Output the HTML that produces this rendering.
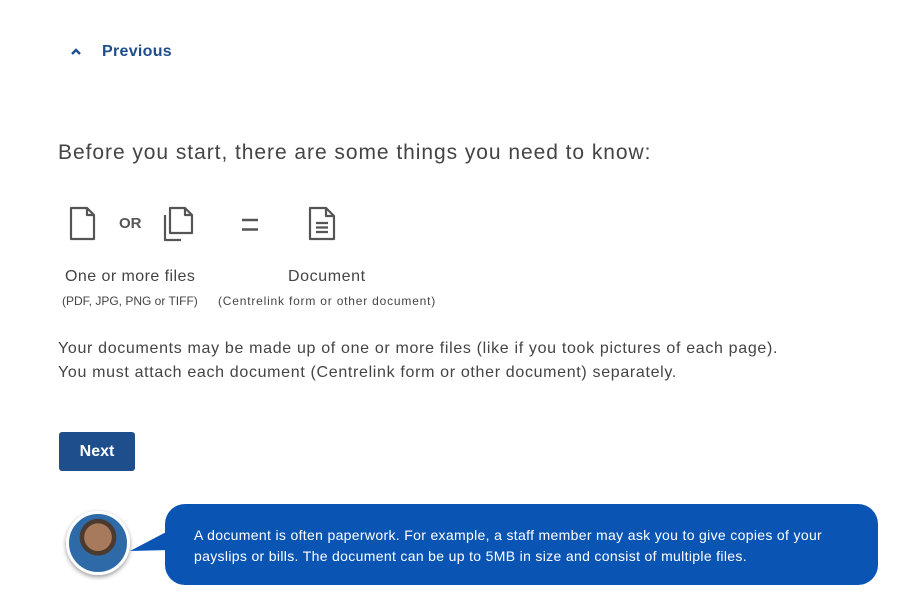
<!DOCTYPE html>
<html><head><style>
body{margin:0;width:905px;height:614px;background:#fff;font-family:"Liberation Sans",sans-serif;position:relative;overflow:hidden;color:#444}
.a{position:absolute;white-space:nowrap}
</style></head><body>
<svg class="a" style="left:70px;top:47px" width="12" height="10" viewBox="0 0 12 10"><path d="M2 7 L6 3 L10 7" stroke="#1f4e8c" stroke-width="2.4" fill="none"/></svg>
<div class="a" style="left:102px;top:43px;font-size:16px;font-weight:bold;color:#1f4e8c;letter-spacing:0.3px">Previous</div>
<div class="a" style="left:58px;top:141px;font-size:21px;color:#444;letter-spacing:0.95px">Before you start, there are some things you need to know:</div>
<svg class="a" style="left:60px;top:200px" width="290" height="45" viewBox="0 0 290 45">
<g stroke="#555" stroke-width="2.2" fill="none" stroke-linejoin="round">
<path d="M11 8 H27 L34 15 V39 H11 Z M27 8 V15 H34"/>
<path d="M105 15 V40 H121 M110 8 V33 H132 V15 L125 8 Z M125 8 V15 H132"/>
<path d="M250 8 H266 L274 16 V39 H250 Z M266 8 V16 H274"/>
<path d="M256 23 H268 M256 27.5 H268 M256 32 H268"/>
</g>
<path d="M182 20 H198 M182 29.5 H198" stroke="#555" stroke-width="2.6"/>
</svg>
<div class="a" style="left:119px;top:215px;font-size:15px;font-weight:bold;color:#555">OR</div>
<div class="a" style="left:65px;top:268px;font-size:16px;letter-spacing:0.45px">One or more files</div>
<div class="a" style="left:62px;top:294px;font-size:12px">(PDF, JPG, PNG or TIFF)</div>
<div class="a" style="left:288px;top:268px;font-size:16px;letter-spacing:0.6px">Document</div>
<div class="a" style="left:218px;top:294px;font-size:12px;letter-spacing:0.8px">(Centrelink form or other document)</div>
<div class="a" style="left:58px;top:337px;font-size:16px;line-height:24px;letter-spacing:0.67px">Your documents may be made up of one or more files (like if you took pictures of each page).<br>You must attach each document (Centrelink form or other document) separately.</div>
<div class="a" style="left:59px;top:432px;width:76px;height:39px;background:#1f4e8c;border-radius:3px;color:#fff;font-weight:bold;font-size:16px;line-height:39px;text-align:center">Next</div>
<div class="a" style="left:66px;top:511px;width:58px;height:58px;border-radius:50%;border:3px solid #fff;box-shadow:0 2px 5px rgba(0,0,0,.4);background:radial-gradient(circle at 50% 40%,#a87a5c 0 30%,#4a3a30 31% 40%,#2f6aa8 41%)"></div>
<svg class="a" style="left:130px;top:530px" width="40" height="25"><path d="M0 21 L40 0 V20 Z" fill="#0a55b3"/></svg>
<div class="a" style="left:165px;top:504px;width:713px;height:81px;background:#0a55b3;border-radius:20px"></div>
<div class="a" style="left:194px;top:525px;font-size:14px;line-height:21px;color:#fff;letter-spacing:0.33px">A document is often paperwork. For example, a staff member may ask you to give copies of your<br>payslips or bills. The document can be up to 5MB in size and consist of multiple files.</div>
</body></html>
